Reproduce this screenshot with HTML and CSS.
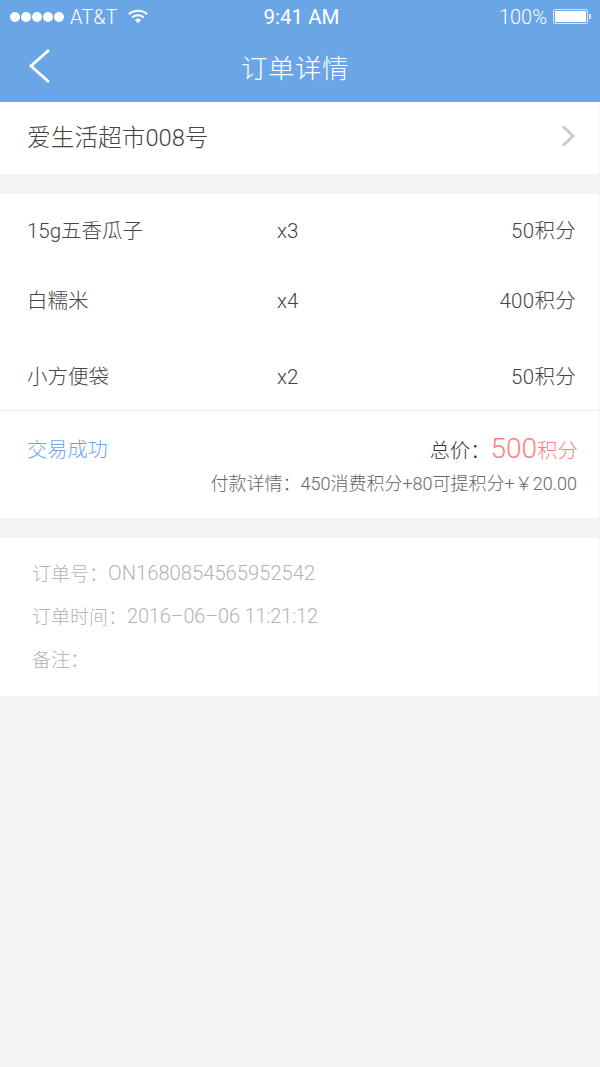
FILE: index.html
```html
<!DOCTYPE html>
<html lang="zh-CN">
<head>
    <meta charset="UTF-8">
    <meta name="viewport" content="width=device-width, initial-scale=1.0">
    <title>订单详情</title>
    <link rel="stylesheet" href="styles.css">
</head>
<body>
    <header class="top">
        <div class="status-bar">
            <div class="status-left">
                <span class="signal"><i></i><i></i><i></i><i></i><i></i></span>
                <span class="carrier">AT&amp;T</span>
                <svg class="wifi" width="20" height="15" viewBox="0 0 20 15">
                    <path d="M1 5.2C6 .6 14 .6 19 5.2M4.2 8.4C7.4 5.5 12.6 5.5 15.800 8.4" fill="none" stroke="#fff" stroke-width="2"/>
                    <path d="M7 11a4.4 4.4 0 0 1 6 0l-3 3.2z" fill="#fff"/>
                </svg>
            </div>
            <div class="status-time">9:41 AM</div>
            <div class="status-right">
                <span>100%</span>
                <span class="battery"><b></b></span>
                <span class="battery-tip"></span>
            </div>
        </div>
        <div class="nav-bar">
            <svg class="back" width="24" height="36" viewBox="0 0 24 36">
                <path d="M22 2 4 18l18 16" fill="none" stroke="#fff" stroke-width="3"/>
            </svg>
            <h1>订单详情</h1>
        </div>
    </header>

    <section class="store">
        <span>爱生活超市008号</span>
        <svg width="14" height="22" viewBox="0 0 14 22">
            <path d="M2 1.500 12 11 2 20.500" fill="none" stroke="#c8c8cc" stroke-width="2.800"/>
        </svg>
    </section>

    <section class="card">
        <div class="items">
            <div class="item"><span>15g五香瓜子</span><span>x3</span><span>50积分</span></div>
            <div class="item"><span>白糯米</span><span>x4</span><span>400积分</span></div>
            <div class="item"><span>小方便袋</span><span>x2</span><span>50积分</span></div>
        </div>
        <div class="summary">
            <div class="summary-top">
                <span class="state">交易成功</span>
                <span class="total">总价：<em>500</em><small>积分</small></span>
            </div>
            <div class="pay-detail">付款详情：450消费积分+80可提积分+￥20.00</div>
        </div>
    </section>

    <section class="info">
        <p>订单号：<span>ON1680854565952542</span></p>
        <p>订单时间：<span class="date">2016–06–06 11:21:12</span></p>
        <p>备注：</p>
    </section>
</body>
</html>
```

FILE: styles.css
```css
* {
    box-sizing: border-box;
}
body {
    margin: 0;
    min-height: 1067px;
    background-color: #f3f3f3;
    color: #444;
    font-family: Roboto, "Noto Sans CJK SC", sans-serif;
    font-weight: 300;
}
.top {
    height: 102px;
    background-color: #6aa6e6;
    color: #fff;
}
.status-bar {
    height: 33px;
    padding: 0 9px 0 10px;
    display: grid;
    grid-template-columns: 1fr auto 1fr;
    align-items: center;
    font-size: 20px;
}
.status-left {
    display: flex;
    align-items: center;
}
.signal {
    display: flex;
    gap: 1px;
}
.signal i {
    width: 10px;
    height: 10px;
    border-radius: 50%;
    background-color: #fff;
}
.carrier {
    margin-left: 6px;
}
.wifi {
    margin-left: 11px;
}
.status-time {
    margin-left: 2px;
    font-size: 20.500px;
    font-weight: 400;
}
.status-right {
    display: flex;
    align-items: center;
    justify-content: flex-end;
}
.battery {
    margin-left: 6px;
    width: 35px;
    height: 15px;
    padding: 1px;
    border: 1px solid #dbe9f9;
    border-radius: 2px;
}
.battery b {
    display: block;
    height: 100%;
    background-color: #fff;
}
.battery-tip {
    width: 2px;
    height: 5px;
    margin-left: 1px;
    background-color: #dbe9f9;
}
.nav-bar {
    height: 69px;
    padding-left: 27px;
    display: flex;
    align-items: center;
}
.nav-bar h1 {
    margin: 0 0 2px 190px;
    font-size: 26.500px;
    font-weight: 300;
    letter-spacing: .5px;
}
.back {
    flex: none;
    margin-bottom: 4px;
}
.store {
    height: 72px;
    padding: 0 24px 4px 27px;
    background-color: #fff;
    border-right: 1px solid #f6f6f6;
    display: flex;
    align-items: center;
    justify-content: space-between;
    font-size: 23.700px;
}
.card {
    margin-top: 20px;
    background-color: #fff;
    border-right: 1px solid #f6f6f6;
}
.items {
    height: 217px;
    padding-top: 2px;
    border-bottom: 1px solid #efefef;
}
.item {
    padding: 0 23px 0 27px;
    display: grid;
    grid-template-columns: 250px 1fr auto;
    align-items: center;
    height: 70px;
    font-size: 20.500px;
    line-height: 30px;
}
.item span:last-child {
    letter-spacing: .3px;
}
.item:last-child {
    margin-top: 6px;
}
.summary {
    height: 107px;
    padding: 21px 21px 0 27px;
}
.summary-top {
    display: flex;
    align-items: center;
    justify-content: space-between;
    font-size: 20.200px;
}
.state {
    color: #6aa6e6;
}
.total {
    color: #333;
}
.total em {
    font-style: normal;
    font-size: 28px;
    color: #ff7f7f;
}
.total small {
    font-size: 20.500px;
    color: #ff7f7f;
}
.pay-detail {
    margin-top: 4px;
    padding-right: 1px;
    text-align: right;
    font-size: 18px;
    color: #666;
}
.info {
    margin-top: 20px;
    height: 158px;
    padding: 13px 32px 0;
    background-color: #fff;
    border-right: 1px solid #f6f6f6;
    font-size: 19px;
    color: #b4b4b4;
}
.info p {
    margin: 0;
    height: 43px;
    display: flex;
    align-items: center;
}
.info span {
    font-size: 20.200px;
}
.info .date {
    font-size: 20px;
    letter-spacing: -.2px;
}
```
